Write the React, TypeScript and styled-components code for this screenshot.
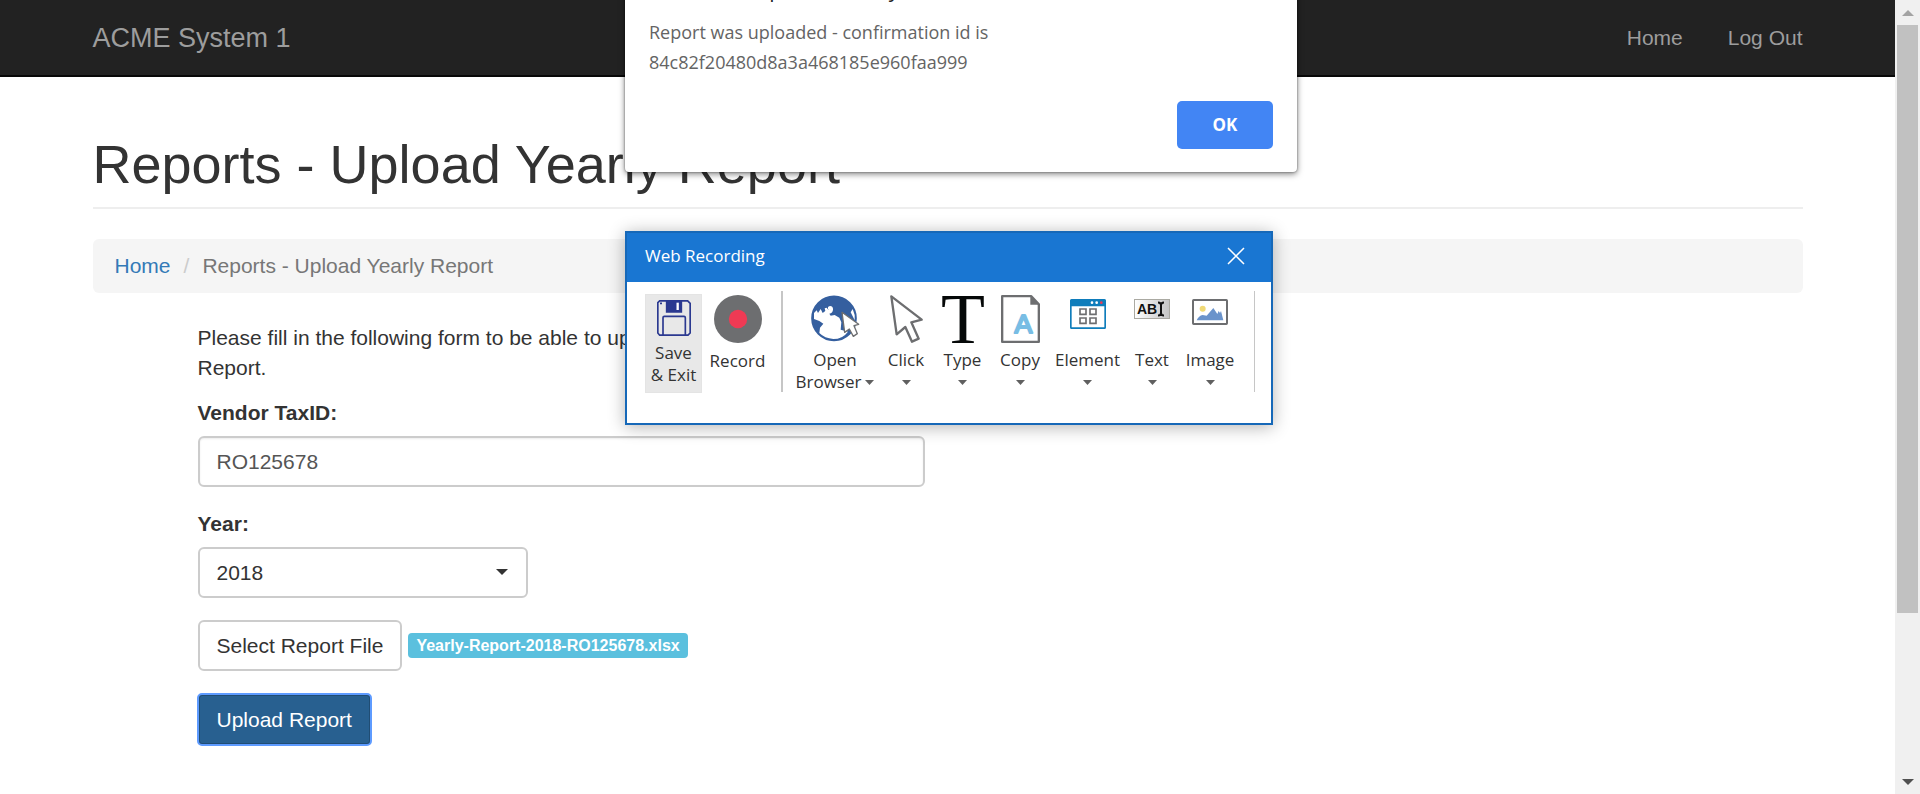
import React from "react";
import styled, { createGlobalStyle, css } from "styled-components";

const ui = `"Open Sans", "Noto Sans", sans-serif`;

const GlobalStyle = createGlobalStyle`
  *, *::before, *::after { box-sizing: border-box; }
  body {
    margin: 0;
    background: #fff;
    color: #333;
    font: 21px/30px "Liberation Sans", Arial, sans-serif;
  }
  button, input, select { font: inherit; margin: 0; }
`;

const Screen = styled.div`
  position: relative;
  display: flex;
  min-height: 100vh;
`;

const Page = styled.div`
  flex: 1;
  min-width: 0;
`;

const NavBar = styled.header`
  background: #222;
  border-bottom: 2px solid #080808;
`;

const Container = styled.div`
  width: calc(100% - 185px);
  max-width: 1710px;
  margin: 0 auto;
`;

const NavInner = styled(Container)`
  display: flex;
  align-items: center;
  justify-content: space-between;
  height: 75px;
`;

const Brand = styled.a`
  color: #9d9d9d;
  font-size: 27px;
  text-decoration: none;
`;

const NavLinks = styled.nav`
  display: flex;
  gap: 45px;
`;

const NavLink = styled.a`
  color: #9d9d9d;
  text-decoration: none;
`;

const Title = styled.h1`
  margin: 57px 0 30px;
  padding-bottom: 13px;
  border-bottom: 2px solid #eee;
  font-size: 54px;
  line-height: 60px;
  font-weight: 400;
`;

const Breadcrumb = styled.ol`
  display: flex;
  margin: 0 0 30px;
  padding: 12px 22px;
  border-radius: 6px;
  background: #f5f5f5;
  color: #777;
  list-style: none;
`;

const Crumb = styled.li`
  & + &::before {
    content: "/";
    margin: 0 13px;
    color: #ccc;
  }
  a { color: #337ab7; text-decoration: none; }
`;

const Form = styled.form`
  max-width: 727px;
  margin-left: 105px;
`;

const Intro = styled.p`
  margin: 0 0 15px;
  padding-right: 40px;
`;

const Field = styled.div`
  margin-bottom: 22px;
`;

const Label = styled.label`
  display: block;
  margin-bottom: 8px;
  font-weight: 700;
`;

const control = css`
  height: 51px;
  padding: 0 17px;
  border: 2px solid #ccc;
  border-radius: 6px;
  background: #fff;
`;

const TextInput = styled.input`
  ${control}
  display: block;
  width: 100%;
  color: #555;
  box-shadow: inset 0 1px 2px rgba(0, 0, 0, 0.08);
`;

const SelectWrap = styled.div`
  position: relative;
  width: 330px;
  svg {
    position: absolute;
    right: 20px;
    top: 22px;
    pointer-events: none;
  }
`;

const Select = styled.select`
  ${control}
  display: block;
  width: 100%;
  color: #333;
  appearance: none;
`;

const FileRow = styled.div`
  display: flex;
  align-items: center;
  gap: 6px;
  margin-bottom: 23px;
`;

const Button = styled.button<{ $primary?: boolean }>`
  ${control}
  color: #333;
  ${(p) =>
    p.$primary &&
    css`
      border-color: #204d74;
      border-radius: 4px;
      background: #286090;
      color: #fff;
      outline: 2px solid #5e9bff;
      outline-offset: -1px;
    `}
`;

const FileTag = styled.span`
  padding: 0 8px;
  border-radius: 4px;
  background: #5bc0de;
  color: #fff;
  font-size: 16px;
  line-height: 25px;
  font-weight: 700;
  white-space: nowrap;
`;

const Scrollbar = styled.div`
  display: flex;
  flex-direction: column;
  width: 25px;
  background: #f0f0f0;
`;

const ScrollArrow = styled.div`
  display: flex;
  align-items: center;
  justify-content: center;
  height: 25px;
`;

const Track = styled.div`
  flex: 1;
  display: flex;
  flex-direction: column;
  padding: 0 2px;
`;

const Thumb = styled.div`
  height: 79%;
  background: #c1c1c1;
`;

const Alert = styled.section`
  position: absolute;
  z-index: 1;
  top: -37px;
  left: 625px;
  width: 672px;
  padding: 15px 24px 23px;
  border-radius: 4px;
  background: #fff;
  box-shadow: 0 2px 6px rgba(0, 0, 0, 0.5), 0 0 2px rgba(0, 0, 0, 0.5);
  font-family: ${ui};
`;

const AlertTitle = styled.h2`
  margin: 0;
  color: #222;
  font-size: 21px;
  line-height: 22px;
  font-weight: 400;
`;

const AlertText = styled.p`
  margin: 17px 0 24px;
  color: #646464;
  font-size: 18px;
  line-height: 30px;
`;

const OkButton = styled.button`
  display: block;
  width: 96px;
  height: 48px;
  margin-left: auto;
  border: 0;
  border-radius: 5px;
  background: #4285f4;
  color: #fff;
  font-size: 17px;
  font-weight: 700;
`;

const Recorder = styled.section`
  position: absolute;
  z-index: 2;
  top: 231px;
  left: 625px;
  width: 648px;
  height: 194px;
  border: 2px solid #1668b8;
  background: #fff;
  box-shadow: 0 2px 16px rgba(0, 0, 0, 0.3);
  color: #333;
  font-family: ${ui};
`;

const RecorderHead = styled.header`
  display: flex;
  align-items: center;
  justify-content: space-between;
  height: 49px;
  padding: 0 22px 3px 18px;
  background: #1976d2;
`;

const RecorderTitle = styled.h2`
  margin: 0;
  color: #fff;
  font-size: 17px;
  font-weight: 400;
`;

const CloseButton = styled.button`
  display: flex;
  padding: 4px;
  border: 0;
  background: none;
`;

const Tools = styled.div`
  display: flex;
  padding: 9px 16px 0 18px;
`;

const Tool = styled.button<{ $w: number; $active?: boolean }>`
  display: flex;
  flex-direction: column;
  align-items: center;
  width: ${(p) => p.$w}px;
  height: 99px;
  margin-top: 3px;
  padding: 0;
  border: ${(p) => (p.$active ? "1px solid #e4e4e4" : "0")};
  background: ${(p) => (p.$active ? "#e8e8e8" : "none")};
  color: #333;
  font-size: 17px;
  line-height: 22px;
  white-space: nowrap;
`;

const iconTops = { large: 1, small: 5, top: 5 };

const IconBox = styled.span<{ $kind?: "large" | "small" | "top" }>`
  display: flex;
  justify-content: center;
  align-items: flex-start;
  height: ${(p) => (p.$kind === "small" ? 47 : 56)}px;
  padding-top: ${(p) => iconTops[p.$kind ?? "large"]}px;
`;

const ToolLine = styled.span`
  display: flex;
  align-items: center;
  gap: 4px;
  min-height: 22px;
`;

const Divider = styled.span<{ $w: number; $left: number; $right: number }>`
  width: ${(p) => p.$w}px;
  height: 101px;
  margin: 0 ${(p) => p.$right}px 0 ${(p) => p.$left}px;
  background: #c6c6c6;
`;

const Caret = () => (
  <svg width="9" height="5" viewBox="0 0 9 5"><path d="M0 0h9L4.500 5z" fill="#606060" /></svg>
);

const SaveIcon = () => (
  <svg width="34" height="36" viewBox="0 0 102 108" fill="none" stroke="#2b3990" strokeWidth="5">
    <path d="M8 2.500H92L99.500 10V99L93 105.500H8L2.500 99V8z" />
    <path d="M29 2.500V36H73V2.500" fill="#2b3990" />
    <path d="M62 8V30" stroke="#fff" strokeWidth="7" />
    <path d="M18 105V53Q18 49 22 49H81Q85 49 85 53V105" />
    <path d="M9 10H15" />
  </svg>
);

const RecordIcon = () => (
  <svg width="48" height="48" viewBox="0 0 48 48">
    <circle cx="24" cy="24" r="24" fill="#6d6e70" />
    <circle cx="24" cy="24" r="9.200" fill="#ef3a54" />
  </svg>
);

const GlobeIcon = () => (
  <svg width="50" height="48" viewBox="0 0 150 144">
    <circle cx="72" cy="70" r="65" fill="#355f9f" stroke="#355f9f" strokeWidth="7" />
    <path
      d="M12 54L20 46L24 54L32 42L38 54L46 48L44 40L50 38L56 46Q50 34 60 33Q70 34 69 44Q68 54 58 56L62 62L74 60L88 68L94 82L92 104L114 110Q98 132 70 132Q44 130 28 114L30 98L40 86L28 78L12 72z"
      fill="#fff"
    />
    <path d="M122 52L128 42L134 60L134 76z" fill="#fff" />
    <path d="M96 52L146 88L132 92L142 116L130 124L118 102L104 112z" fill="#fff" stroke="#6d6e70" strokeWidth="4" strokeLinejoin="round" />
  </svg>
);

const ClickIcon = () => (
  <svg width="33" height="48" viewBox="0 0 99 144" fill="none" stroke="#6d6e70" strokeWidth="7" strokeLinejoin="round">
    <path d="M4 4L95 74L64 82L86 131L66 140L46 96L20 118z" />
  </svg>
);

const TypeIcon = () => (
  <svg width="46" height="48" viewBox="0 0 46 48">
    <text x="23" y="48" textAnchor="middle" fontFamily="Liberation Serif, serif" fontSize="72" fill="#050808">T</text>
  </svg>
);

const CopyIcon = () => (
  <svg width="39" height="48" viewBox="0 0 117 144">
    <path d="M3.500 3.500H91L113.500 28V140.500H3.500z" fill="#fff" stroke="#6d6e70" strokeWidth="7" strokeLinejoin="round" />
    <path d="M88 3V29H115z" fill="#6d6e70" />
    <text x="67" y="114" textAnchor="middle" fontFamily="Liberation Sans, sans-serif" fontSize="80" fill="#78bde4" stroke="#78bde4" strokeWidth="6" strokeLinejoin="round">A</text>
  </svg>
);

const ElementIcon = () => (
  <svg width="36" height="30" viewBox="0 0 108 90">
    <rect x="2.500" y="2.500" width="103" height="85" rx="2" fill="#fff" stroke="#0f7dbb" strokeWidth="5" />
    <path d="M2 2H106V22H2z" fill="#0f7dbb" />
    <circle cx="66" cy="11" r="4" fill="#fff" />
    <circle cx="80" cy="11" r="4" fill="#fff" />
    <circle cx="94" cy="11" r="4" fill="#ef3a54" />
    <path d="M30 30H48V46H30zM60 30H78V46H60zM30 57H48V73H30zM60 57H78V73H60z" fill="none" stroke="#6d6e70" strokeWidth="5" />
  </svg>
);

const TextIcon = () => (
  <svg width="36" height="20" viewBox="0 0 36 20">
    <defs>
      <linearGradient id="textFill" x1="0" x2="1">
        <stop offset="0" stopColor="#fff" />
        <stop offset="1" stopColor="#c4c4c4" />
      </linearGradient>
    </defs>
    <rect x=".5" y=".5" width="35" height="19" fill="url(#textFill)" stroke="#aaa9a2" />
    <text x="3" y="15" fontFamily="Liberation Sans, sans-serif" fontWeight="700" fontSize="14" fill="#111">AB</text>
    <path d="M24 3.500Q27 3.500 27 6V14Q27 16.500 24 16.500M30 3.500Q27 3.500 27 6M27 14Q27 16.500 30 16.500" fill="none" stroke="#111" strokeWidth="2" />
  </svg>
);

const ImageIcon = () => (
  <svg width="36" height="26" viewBox="0 0 108 78">
    <rect x="3" y="3" width="102" height="72" rx="2" fill="#fff" stroke="#6d6e70" strokeWidth="6" />
    <circle cx="32" cy="29" r="9" fill="#f0d976" />
    <path d="M14 64Q20 50 32 48L44 50L64 27L76 45L80 36L84 42L87 36L94 64z" fill="#6a93cb" />
  </svg>
);

const tools = [
  { name: "Click", width: 58, icon: <ClickIcon /> },
  { name: "Type", width: 55, icon: <TypeIcon /> },
  { name: "Copy", width: 60, icon: <CopyIcon /> },
  { name: "Element", width: 75, icon: <ElementIcon />, small: true },
  { name: "Text", width: 54, icon: <TextIcon />, small: true },
  { name: "Image", width: 62, icon: <ImageIcon />, small: true },
];

export default function App() {
  return (
    <Screen>
      <GlobalStyle />
      <Page>
        <NavBar>
          <NavInner>
            <Brand href="#">ACME System 1</Brand>
            <NavLinks>
              <NavLink href="#">Home</NavLink>
              <NavLink href="#">Log Out</NavLink>
            </NavLinks>
          </NavInner>
        </NavBar>
        <Container as="main">
          <Title>Reports - Upload Yearly Report</Title>
          <Breadcrumb>
            <Crumb><a href="#">Home</a></Crumb>
            <Crumb>Reports - Upload Yearly Report</Crumb>
          </Breadcrumb>
          <Form onSubmit={(e) => e.preventDefault()}>
            <Intro>Please fill in the following form to be able to upload the Vendor Yearly Report.</Intro>
            <Field>
              <Label htmlFor="taxId">Vendor TaxID:</Label>
              <TextInput id="taxId" defaultValue="RO125678" />
            </Field>
            <Field>
              <Label htmlFor="year">Year:</Label>
              <SelectWrap>
                <Select id="year" defaultValue="2018">
                  <option>2018</option>
                </Select>
                <svg width="12" height="6" viewBox="0 0 12 6"><path d="M0 0h12L6 6z" fill="#333" /></svg>
              </SelectWrap>
            </Field>
            <FileRow>
              <Button type="button">Select Report File</Button>
              <FileTag>Yearly-Report-2018-RO125678.xlsx</FileTag>
            </FileRow>
            <Button type="submit" $primary>Upload Report</Button>
          </Form>
        </Container>
      </Page>
      <Scrollbar aria-hidden="true">
        <ScrollArrow><svg width="12" height="6" viewBox="0 0 12 6"><path d="M6 0l6 6H0z" fill="#a3a3a3" /></svg></ScrollArrow>
        <Track><Thumb /></Track>
        <ScrollArrow><svg width="12" height="6" viewBox="0 0 12 6"><path d="M0 0h12L6 6z" fill="#505050" /></svg></ScrollArrow>
      </Scrollbar>

      <Alert role="alertdialog">
        <AlertTitle>acme-test.uipath.com says</AlertTitle>
        <AlertText>
          Report was uploaded - confirmation id is
          <br />
          84c82f20480d8a3a468185e960faa999
        </AlertText>
        <OkButton type="button">OK</OkButton>
      </Alert>

      <Recorder role="dialog" aria-label="Web Recording">
        <RecorderHead>
          <RecorderTitle>Web Recording</RecorderTitle>
          <CloseButton type="button" aria-label="Close">
            <svg width="18" height="18" viewBox="0 0 18 18" stroke="#fff" strokeWidth="1.500"><path d="M1 1l16 16M17 1L1 17" /></svg>
          </CloseButton>
        </RecorderHead>
        <Tools>
          <Tool type="button" $w={57} $active>
            <IconBox $kind="small"><SaveIcon /></IconBox>
            <ToolLine>Save</ToolLine>
            <ToolLine>&amp; Exit</ToolLine>
          </Tool>
          <Tool type="button" $w={71}>
            <IconBox><RecordIcon /></IconBox>
            <ToolLine>Record</ToolLine>
          </Tool>
          <Divider $w={2} $left={8} $right={10} />
          <Tool type="button" $w={84}>
            <IconBox><GlobeIcon /></IconBox>
            <ToolLine>Open</ToolLine>
            <ToolLine>Browser<Caret /></ToolLine>
          </Tool>
          {tools.map((t) => (
            <Tool type="button" key={t.name} $w={t.width}>
              <IconBox $kind={t.small ? "top" : "large"}>{t.icon}</IconBox>
              <ToolLine>{t.name}</ToolLine>
              <ToolLine><Caret /></ToolLine>
            </Tool>
          ))}
          <Divider $w={1} $left={13} $right={0} />
        </Tools>
      </Recorder>
    </Screen>
  );
}
